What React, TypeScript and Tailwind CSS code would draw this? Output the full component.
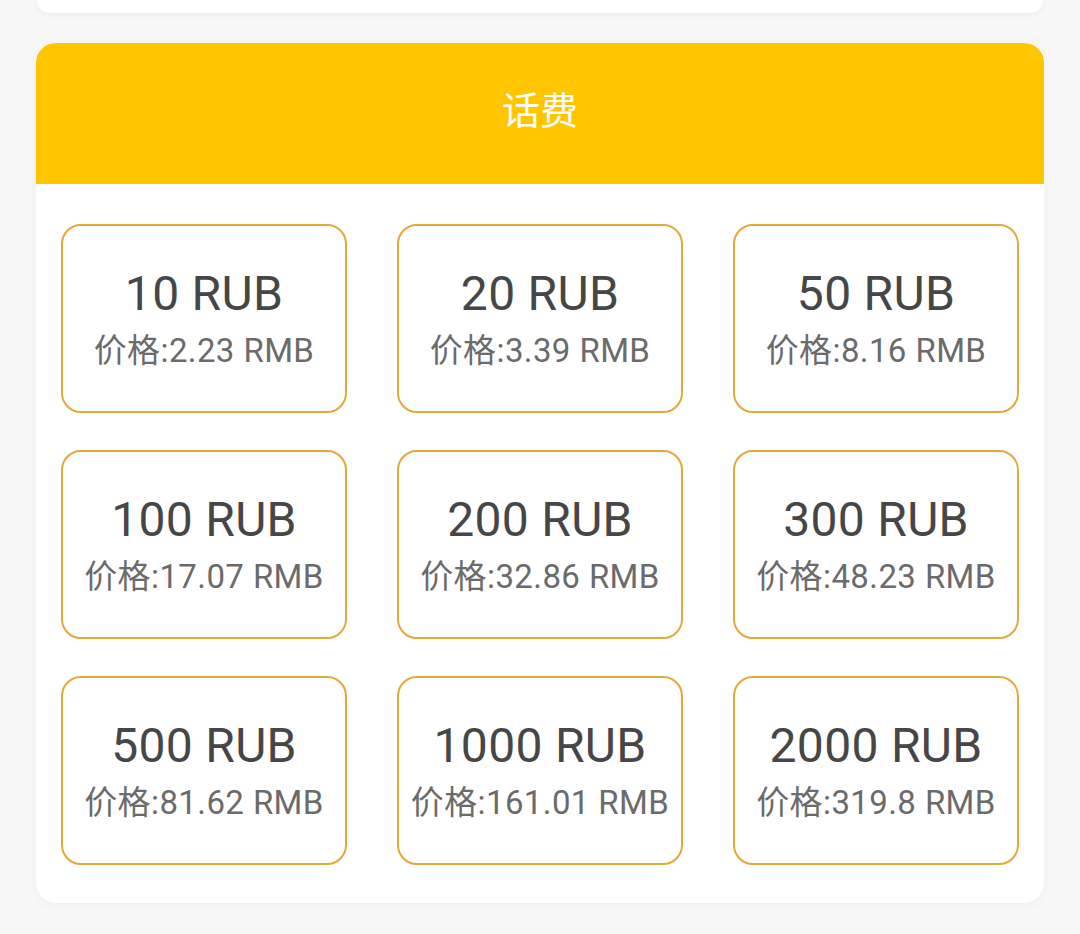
const items = [
  { amount: "10 RUB", price: "2.23 RMB" },
  { amount: "20 RUB", price: "3.39 RMB" },
  { amount: "50 RUB", price: "8.16 RMB" },
  { amount: "100 RUB", price: "17.07 RMB" },
  { amount: "200 RUB", price: "32.86 RMB" },
  { amount: "300 RUB", price: "48.23 RMB" },
  { amount: "500 RUB", price: "81.62 RMB" },
  { amount: "1000 RUB", price: "161.01 RMB" },
  { amount: "2000 RUB", price: "319.8 RMB" },
];

export default function App() {
  return (
    <div
      className="min-h-[934px] w-[1080px] bg-[#f7f7f7] overflow-hidden"
      style={{ fontFamily: 'Roboto, "Noto Sans CJK SC", sans-serif' }}
    >
      {/* previous card tail */}
      <div className="mx-[37px] h-[13px] bg-white rounded-b-[20px] shadow-[0_2px_6px_rgba(0,0,0,0.05)]" />

      {/* recharge card */}
      <div className="mx-[36px] mt-[30px] bg-white rounded-[20px] overflow-hidden shadow-[0_2px_8px_rgba(0,0,0,0.04)]">
        <div className="h-[141px] bg-[#ffc600] flex items-center justify-center pb-[6px]">
          <span className="text-white text-[38px] leading-none">话费</span>
        </div>
        <div className="grid grid-cols-3 gap-x-[50px] gap-y-[37px] px-[25px] pt-[40px] pb-[38px]">
          {items.map((it) => (
            <div
              key={it.amount}
              className="h-[189px] rounded-[20px] border-[2.5px] border-[#e6a838] flex flex-col items-center justify-center"
            >
              <div className="text-[48px] leading-[56px] text-[#464646] tracking-[0.3px]">{it.amount}</div>
              <div className="text-[33px] leading-[40px] text-[#6b6b6b] mt-[9px] tracking-[0.4px]">价格:{it.price}</div>
            </div>
          ))}
        </div>
      </div>
    </div>
  );
}
